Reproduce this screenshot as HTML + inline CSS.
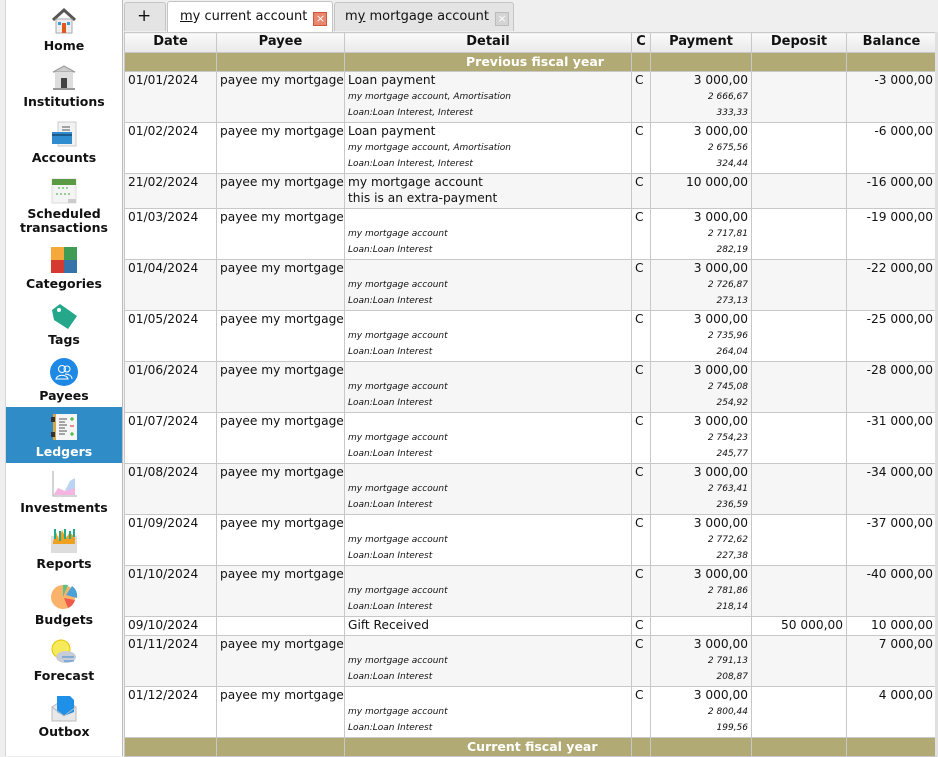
<!DOCTYPE html>
<html><head><meta charset="utf-8"><style>
*{margin:0;padding:0;box-sizing:border-box}
body{width:938px;height:756px;overflow:hidden;background:#efefef;font-family:"DejaVu Sans","Liberation Sans",sans-serif;font-size:13px;color:#111;position:relative}
#side{position:absolute;left:5px;top:0;width:118px;height:756px;background:#fff;border-right:1px solid #bcbcbc;border-left:1px solid #d6d6d6}
.ic{position:absolute;left:44px;width:28px;height:28px}
.lab{position:absolute;left:0;width:116px;text-align:center;font-weight:bold;font-size:12.5px;line-height:14px}
#tabs{position:absolute;left:124px;top:2px;height:29px}
.tab{position:absolute;top:0;height:29px;border:1px solid #c4c4c4;border-bottom:none;border-radius:3px 3px 0 0;background:#e4e4e4;font-size:13px;line-height:27px;padding-left:10px}
table{position:absolute;left:124px;top:32px;width:812px;border-collapse:collapse;table-layout:fixed;background:#fff}
td,th{border:1px solid #c8c8c8;vertical-align:top;padding:0 3px;white-space:nowrap;overflow:hidden}
td{font-size:12.2px;line-height:17px}
th{height:20px;font-weight:bold;font-size:13px;line-height:18px;background:linear-gradient(#fafafa,#e9e9e9);text-align:center}
tr.sec td{background:#b2aa74;color:#fff;font-weight:bold;height:19px;line-height:17px;font-size:12.5px}
tr.g td{background:#f6f6f6}
tr.m td{height:51px}
tr.s td{height:19px}
td.r{text-align:right}
.sub{font-style:italic;font-size:9px;line-height:16px;display:block}
#sb{position:absolute;left:935px;top:32px;width:3px;height:724px;background:#e0e0e0}
</style></head><body>
<div id="side">
 <svg class="ic" style="top:6px" viewBox="0 0 28 28"><path d="M3 14 L14 4 L25 14" fill="none" stroke="#555" stroke-width="3"/><rect x="6" y="13" width="16" height="14" fill="#eee" stroke="#aaa"/><rect x="12" y="17" width="4" height="10" fill="#e05a1c"/><rect x="8" y="16" width="3" height="3" fill="#3a9ad9"/><rect x="17" y="16" width="3" height="3" fill="#3a9ad9"/></svg>
 <div class="lab" style="top:39px">Home</div>
 <svg class="ic" style="top:63px" viewBox="0 0 28 28"><path d="M3 9 L14 3 L25 9Z" fill="#ccc" stroke="#999"/><rect x="5" y="9" width="18" height="16" fill="#ddd"/><rect x="11" y="15" width="6" height="10" fill="#444"/><rect x="3" y="25" width="22" height="2" fill="#999"/></svg>
 <div class="lab" style="top:95px">Institutions</div>
 <svg class="ic" style="top:120px" viewBox="0 0 28 28"><rect x="8" y="2" width="18" height="24" fill="#f2f2f2" stroke="#ccc"/><path d="M12 7h8M12 10h8" stroke="#555"/><rect x="2" y="12" width="20" height="12" fill="#2f8ccf"/><rect x="2" y="14" width="20" height="2" fill="#1d5b8a"/></svg>
 <div class="lab" style="top:151px">Accounts</div>
 <svg class="ic" style="top:176px" viewBox="0 0 28 28"><rect x="2" y="3" width="24" height="24" fill="#f4f4f4" stroke="#ddd"/><rect x="2" y="3" width="24" height="6" fill="#5b9a45"/><path d="M8 12h12M6 18h16" stroke="#3a3" stroke-dasharray="2 2"/><rect x="18" y="23" width="8" height="4" fill="#ccc"/></svg>
 <div class="lab" style="top:207px">Scheduled<br>transactions</div>
 <svg class="ic" style="top:246px" viewBox="0 0 28 28"><rect x="1" y="1" width="13" height="13" fill="#f5a93a"/><rect x="14" y="1" width="13" height="13" fill="#3f9c55"/><rect x="1" y="14" width="13" height="13" fill="#d5392f"/><rect x="14" y="14" width="13" height="13" fill="#3573a8"/></svg>
 <div class="lab" style="top:277px">Categories</div>
 <svg class="ic" style="top:302px" viewBox="0 0 28 28"><path d="M2 8 L10 2 L27 14 L18 27 L4 18Z" fill="#25a88a"/><circle cx="9" cy="8" r="2" fill="#fff"/></svg>
 <div class="lab" style="top:333px">Tags</div>
 <svg class="ic" style="top:358px" viewBox="0 0 28 28"><circle cx="14" cy="14" r="14" fill="#1e88e5"/><circle cx="12" cy="11" r="3.5" fill="none" stroke="#fff"/><circle cx="17" cy="11" r="3" fill="none" stroke="#fff"/><path d="M6 21c1-5 11-5 12 0zM15 16c4 0 7 2 7 5" fill="none" stroke="#fff"/></svg>
 <div class="lab" style="top:389px">Payees</div>
 <div style="position:absolute;left:0;top:407px;width:116px;height:56px;background:#308cc6"></div>
 <svg class="ic" style="top:413px" viewBox="0 0 28 28"><rect x="3" y="1" width="24" height="26" fill="#f5f5f5"/><rect x="3" y="1" width="3" height="26" fill="#d6a748"/><rect x="1" y="4" width="4" height="5" fill="#333"/><rect x="1" y="19" width="4" height="5" fill="#333"/><path d="M9 6h8M9 9h6M9 12h8M9 15h6M9 18h8M9 21h6" stroke="#555"/><path d="M20 6h4M22 4v4M20 21h4M22 19v4" stroke="#2a2"/><path d="M20 13h4" stroke="#d22"/></svg>
 <div class="lab" style="top:445px;color:#fff">Ledgers</div>
 <svg class="ic" style="top:470px" viewBox="0 0 28 28"><path d="M3 1v25h24" stroke="#aaa" fill="none"/><path d="M4 24 L8 18 L15 21 L20 11 L25 8 V25 H4Z" fill="#f4b6e0"/><path d="M15 21 L20 11 L25 8 V18 Z" fill="#bcd4f4"/></svg>
 <div class="lab" style="top:501px">Investments</div>
 <svg class="ic" style="top:526px" viewBox="0 0 28 28"><rect x="1" y="10" width="26" height="17" fill="#ddd"/><path d="M3 16 L6 6 L9 14 L12 4 L16 12 L20 6 L25 12 V18 H3Z" fill="#f0a020"/><path d="M5 3v10M10 5v10M15 3v10M20 5v8M24 3v8" stroke="#2a8" stroke-width="2"/></svg>
 <div class="lab" style="top:557px">Reports</div>
 <svg class="ic" style="top:582px" viewBox="0 0 28 28"><circle cx="13" cy="15" r="12" fill="#fbb36b"/><path d="M13 15 L18 3 A12 12 0 0 0 13 3Z" fill="#5cc28a"/><path d="M16 13 L22 4 A12 12 0 0 1 27 16Z" fill="#4aa2d8"/><path d="M14 16 L25 18 A12 12 0 0 1 18 26Z" fill="#ef5a4a"/></svg>
 <div class="lab" style="top:613px">Budgets</div>
 <svg class="ic" style="top:638px" viewBox="0 0 28 28"><circle cx="11" cy="11" r="9" fill="#f6ea5a" stroke="#e5c400"/><ellipse cx="16" cy="19" rx="10" ry="6" fill="#c8ccd6"/><path d="M12 19h12M14 23h10" stroke="#3b8bd0"/></svg>
 <div class="lab" style="top:669px">Forecast</div>
 <svg class="ic" style="top:694px" viewBox="0 0 28 28"><path d="M2 13 L14 5 L26 13 V27 H2Z" fill="#e8e8e8" stroke="#bbb"/><path d="M7 2 H20 L24 6 V18 L14 22 L7 18Z" fill="#1e90e8"/><path d="M2 13 L14 22 L26 13" fill="none" stroke="#bbb"/></svg>
 <div class="lab" style="top:725px">Outbox</div>
</div>
<div id="tabs">
 <div class="tab" style="left:0;width:42px;padding-left:12px;font-size:17px">+</div>
 <div class="tab" style="left:43px;width:166px;top:-1px;height:31px;background:#fff;padding-left:12px;line-height:30px"><u>m</u>y current account <span style="display:inline-block;width:14px;height:14px;background:#e9866e;border:1px solid #d0553a;vertical-align:-2px;margin-left:2px;color:#fff;font-size:11px;line-height:12px;text-align:center">×</span></div>
 <div class="tab" style="left:210px;width:180px">m<u>y</u> mortgage account <span style="display:inline-block;width:14px;height:14px;background:#d4d4d4;border:1px solid #bbb;vertical-align:-2px;margin-left:2px;color:#fff;font-size:11px;line-height:12px;text-align:center">×</span></div>
</div>
<table>
<colgroup><col style="width:92px"><col style="width:128px"><col style="width:287px"><col style="width:19px"><col style="width:101px"><col style="width:95px"><col style="width:90px"></colgroup>
<tr><th>Date</th><th>Payee</th><th>Detail</th><th>C</th><th>Payment</th><th>Deposit</th><th>Balance</th></tr>
<tr class="sec"><td></td><td></td><td style="padding-left:121px">Previous fiscal year</td><td></td><td></td><td></td><td></td></tr>
<tr class="m g"><td>01/01/2024</td><td>payee my mortgage</td><td>Loan payment<span class="sub">my mortgage account, Amortisation</span><span class="sub">Loan:Loan Interest, Interest</span></td><td>C</td><td class="r">3 000,00<span class="sub">2 666,67</span><span class="sub">333,33</span></td><td></td><td class="r">-3 000,00</td></tr>
<tr class="m"><td>01/02/2024</td><td>payee my mortgage</td><td>Loan payment<span class="sub">my mortgage account, Amortisation</span><span class="sub">Loan:Loan Interest, Interest</span></td><td>C</td><td class="r">3 000,00<span class="sub">2 675,56</span><span class="sub">324,44</span></td><td></td><td class="r">-6 000,00</td></tr>
<tr class="g"><td style="height:35px">21/02/2024</td><td>payee my mortgage</td><td style="line-height:16px">my mortgage account<br>this is an extra-payment</td><td>C</td><td class="r">10 000,00</td><td></td><td class="r">-16 000,00</td></tr>
<tr class="m"><td>01/03/2024</td><td>payee my mortgage</td><td>&nbsp;<span class="sub">my mortgage account</span><span class="sub">Loan:Loan Interest</span></td><td>C</td><td class="r">3 000,00<span class="sub">2 717,81</span><span class="sub">282,19</span></td><td></td><td class="r">-19 000,00</td></tr>
<tr class="m g"><td>01/04/2024</td><td>payee my mortgage</td><td>&nbsp;<span class="sub">my mortgage account</span><span class="sub">Loan:Loan Interest</span></td><td>C</td><td class="r">3 000,00<span class="sub">2 726,87</span><span class="sub">273,13</span></td><td></td><td class="r">-22 000,00</td></tr>
<tr class="m"><td>01/05/2024</td><td>payee my mortgage</td><td>&nbsp;<span class="sub">my mortgage account</span><span class="sub">Loan:Loan Interest</span></td><td>C</td><td class="r">3 000,00<span class="sub">2 735,96</span><span class="sub">264,04</span></td><td></td><td class="r">-25 000,00</td></tr>
<tr class="m g"><td>01/06/2024</td><td>payee my mortgage</td><td>&nbsp;<span class="sub">my mortgage account</span><span class="sub">Loan:Loan Interest</span></td><td>C</td><td class="r">3 000,00<span class="sub">2 745,08</span><span class="sub">254,92</span></td><td></td><td class="r">-28 000,00</td></tr>
<tr class="m"><td>01/07/2024</td><td>payee my mortgage</td><td>&nbsp;<span class="sub">my mortgage account</span><span class="sub">Loan:Loan Interest</span></td><td>C</td><td class="r">3 000,00<span class="sub">2 754,23</span><span class="sub">245,77</span></td><td></td><td class="r">-31 000,00</td></tr>
<tr class="m g"><td>01/08/2024</td><td>payee my mortgage</td><td>&nbsp;<span class="sub">my mortgage account</span><span class="sub">Loan:Loan Interest</span></td><td>C</td><td class="r">3 000,00<span class="sub">2 763,41</span><span class="sub">236,59</span></td><td></td><td class="r">-34 000,00</td></tr>
<tr class="m"><td>01/09/2024</td><td>payee my mortgage</td><td>&nbsp;<span class="sub">my mortgage account</span><span class="sub">Loan:Loan Interest</span></td><td>C</td><td class="r">3 000,00<span class="sub">2 772,62</span><span class="sub">227,38</span></td><td></td><td class="r">-37 000,00</td></tr>
<tr class="m g"><td>01/10/2024</td><td>payee my mortgage</td><td>&nbsp;<span class="sub">my mortgage account</span><span class="sub">Loan:Loan Interest</span></td><td>C</td><td class="r">3 000,00<span class="sub">2 781,86</span><span class="sub">218,14</span></td><td></td><td class="r">-40 000,00</td></tr>
<tr class="s"><td>09/10/2024</td><td></td><td>Gift Received</td><td>C</td><td></td><td class="r">50 000,00</td><td class="r">10 000,00</td></tr>
<tr class="m g"><td>01/11/2024</td><td>payee my mortgage</td><td>&nbsp;<span class="sub">my mortgage account</span><span class="sub">Loan:Loan Interest</span></td><td>C</td><td class="r">3 000,00<span class="sub">2 791,13</span><span class="sub">208,87</span></td><td></td><td class="r">7 000,00</td></tr>
<tr class="m"><td>01/12/2024</td><td>payee my mortgage</td><td>&nbsp;<span class="sub">my mortgage account</span><span class="sub">Loan:Loan Interest</span></td><td>C</td><td class="r">3 000,00<span class="sub">2 800,44</span><span class="sub">199,56</span></td><td></td><td class="r">4 000,00</td></tr>
<tr class="sec"><td></td><td></td><td style="padding-left:122px">Current fiscal year</td><td></td><td></td><td></td><td></td></tr>
</table>
<div id="sb"></div>
</body></html>
